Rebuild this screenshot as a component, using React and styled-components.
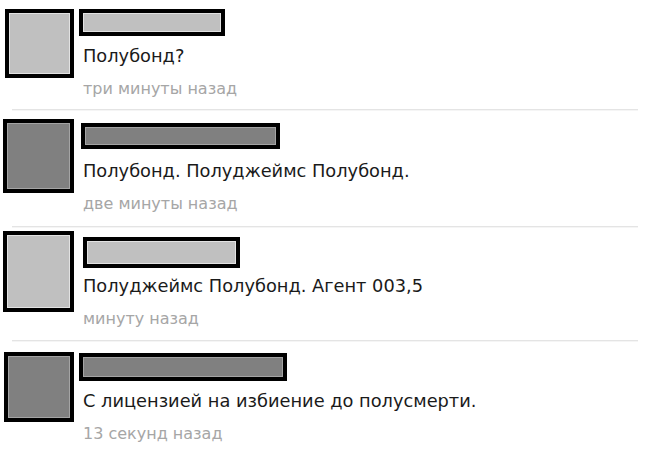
import styled, { createGlobalStyle } from 'styled-components';

const GlobalStyle = createGlobalStyle`
  html, body {
    margin: 0;
    padding: 0;
    background: #fff;
  }
  body {
    width: 650px;
    height: 451px;
    overflow: hidden;
    font-family: "DejaVu Sans", "Liberation Sans", sans-serif;
  }
`;

// комментарии: аватар и имя закрашены, у каждого свои размеры
const comments = [
  {
    tone: 'light',
    rowH: 109,
    avatar: { left: 5, top: 9, w: 69, h: 69 },
    bar: { left: 0, top: 9, w: 146, h: 27 },
    textTop: 45,
    text: 'Полубонд?',
    time: 'три минуты назад',
  },
  {
    tone: 'dark',
    rowH: 115,
    avatar: { left: 3, top: 8, w: 71, h: 74 },
    bar: { left: 2, top: 12, w: 199, h: 26 },
    textTop: 49,
    text: 'Полубонд. Полуджеймс Полубонд.',
    time: 'две минуты назад',
  },
  {
    tone: 'light',
    rowH: 112,
    avatar: { left: 3, top: 3, w: 71, h: 81 },
    bar: { left: 4, top: 9, w: 157, h: 31 },
    textTop: 47,
    text: 'Полуджеймс Полубонд. Агент 003,5',
    time: 'минуту назад',
  },
  {
    tone: 'dark',
    rowH: 109,
    avatar: { left: 4, top: 10, w: 70, h: 70 },
    bar: { left: 0, top: 11, w: 208, h: 28 },
    textTop: 48,
    text: 'С лицензией на избиение до полусмерти.',
    time: '13 секунд назад',
  },
];

const fills = {
  light: { bg: '#c0c0c0', edge: '#e2e2e2' },
  dark: { bg: '#808080', edge: '#a4a4a4' },
};

const App = () => {
  return (
    <>
      <GlobalStyle />
      <Feed>
        {comments.map((c, i) => (
          <div key={i}>
            {i > 0 && <Divider />}
            <Row $h={c.rowH}>
              <Avatar
                $tone={c.tone}
                $left={c.avatar.left}
                $top={c.avatar.top}
                $w={c.avatar.w}
                $h={c.avatar.h}
              />
              <Body>
                <Head $h={c.textTop}>
                  <NameBar
                    $tone={c.tone}
                    $left={c.bar.left}
                    $top={c.bar.top}
                    $w={c.bar.w}
                    $h={c.bar.h}
                  />
                </Head>
                <Message>{c.text}</Message>
                <Time>{c.time}</Time>
              </Body>
            </Row>
          </div>
        ))}
      </Feed>
    </>
  );
};

const Feed = styled.div`
  display: flex;
  flex-direction: column;
  width: 650px;
`;

const Row = styled.div`
  display: grid;
  grid-template-columns: 79px 1fr;
  align-items: start;
  height: ${(p) => p.$h}px;
`;

const Divider = styled.div`
  margin: 0 12px;
  width: 626px;
  height: 1px;
  background: #e4e4e4;
  border-bottom: 1px solid #f5f5f5;
`;

const Avatar = styled.div`
  box-sizing: border-box;
  margin-left: ${(p) => p.$left}px;
  margin-top: ${(p) => p.$top}px;
  width: ${(p) => p.$w}px;
  height: ${(p) => p.$h}px;
  border: 4px solid #000;
  background: ${(p) => fills[p.$tone].bg};
  box-shadow: inset 0 0 0 1px ${(p) => fills[p.$tone].edge};
`;

const Body = styled.div`
  display: flex;
  flex-direction: column;
  min-width: 0;
`;

const Head = styled.div`
  height: ${(p) => p.$h}px;
  display: flex;
  align-items: flex-start;
`;

const NameBar = styled.div`
  box-sizing: border-box;
  margin-left: ${(p) => p.$left}px;
  margin-top: ${(p) => p.$top}px;
  width: ${(p) => p.$w}px;
  height: ${(p) => p.$h}px;
  border: 4px solid #000;
  background: ${(p) => fills[p.$tone].bg};
  box-shadow: inset 0 0 0 1px ${(p) => fills[p.$tone].edge};
`;

const Message = styled.div`
  padding-left: 4px;
  font-size: 17.8px;
  line-height: 22px;
  color: #1a1a1a;
  white-space: nowrap;
`;

const Time = styled.div`
  margin-top: 12px;
  padding-left: 4px;
  font-size: 16px;
  line-height: 20px;
  color: #a6a6a6;
  white-space: nowrap;
`;

export default App;
